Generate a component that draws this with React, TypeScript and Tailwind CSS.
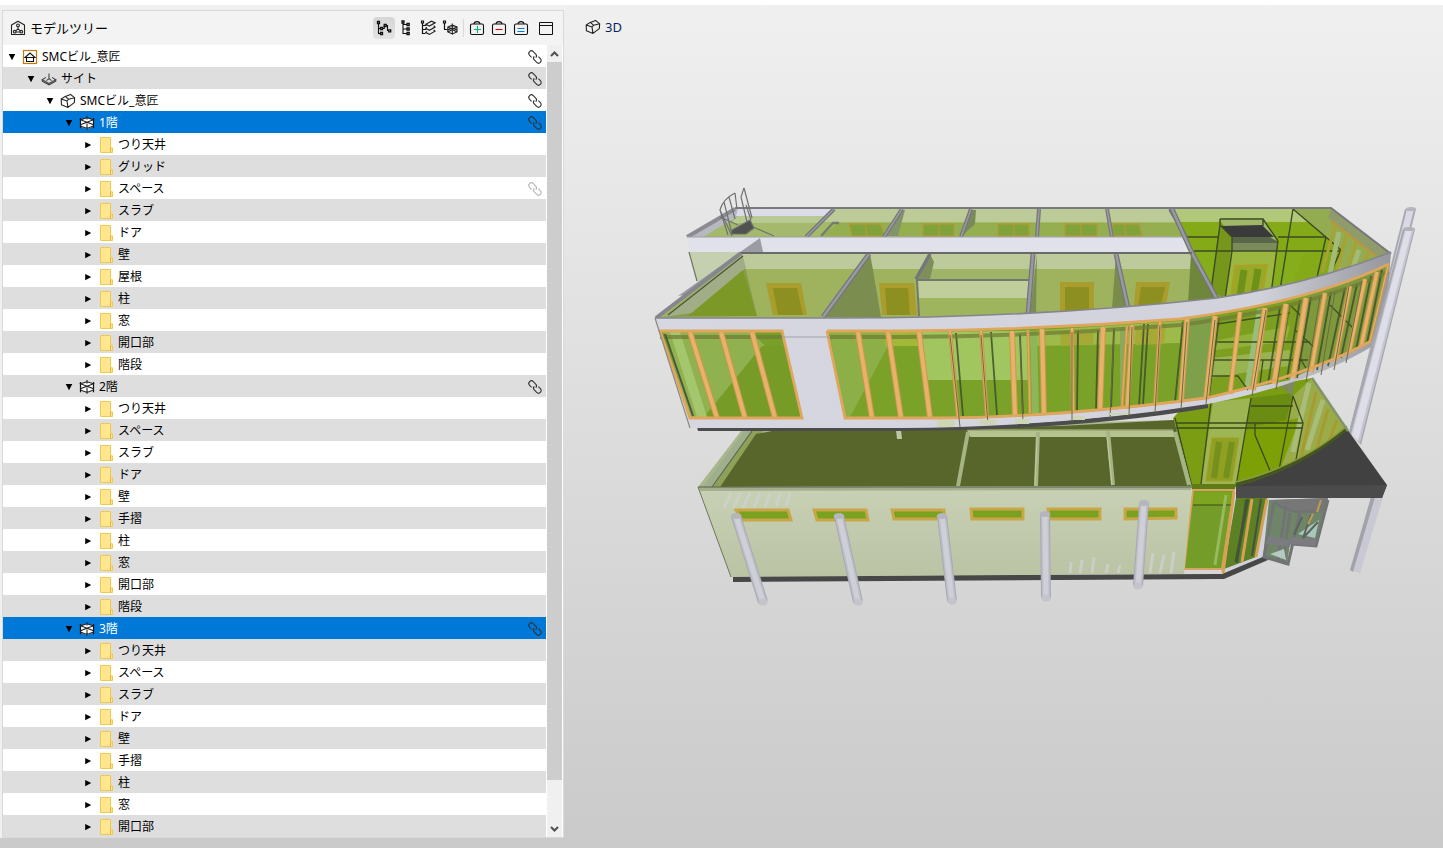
import { useState, type ReactNode } from "react";

type Kind = "project" | "site" | "building" | "storey" | "folder";
type Node = { id: string; label: string; kind: Kind; level: number; link?: "on" | "faint" };

const storey = (id: string, label: string, parts: string[]): Node[] => [
  { id, label, kind: "storey", level: 3, link: "on" },
  ...parts.map((p) => ({
    id: id + p,
    label: p,
    kind: "folder" as Kind,
    level: 4,
    link: id === "f1" && p === "スペース" ? ("faint" as const) : undefined,
  })),
];

const nodes: Node[] = [
  { id: "project", label: "SMCビル_意匠", kind: "project", level: 0, link: "on" },
  { id: "site", label: "サイト", kind: "site", level: 1, link: "on" },
  { id: "building", label: "SMCビル_意匠", kind: "building", level: 2, link: "on" },
  ...storey("f1", "1階", ["つり天井", "グリッド", "スペース", "スラブ", "ドア", "壁", "屋根", "柱", "窓", "開口部", "階段"]),
  ...storey("f2", "2階", ["つり天井", "スペース", "スラブ", "ドア", "壁", "手摺", "柱", "窓", "開口部", "階段"]),
  ...storey("f3", "3階", ["つり天井", "スペース", "スラブ", "ドア", "壁", "手摺", "柱", "窓", "開口部"]),
];

const indent = ["pl-[2px]", "pl-[21px]", "pl-10", "pl-[59px]", "pl-[78px]"];

function Icon({ children, className = "size-4" }: { children: ReactNode; className?: string }) {
  return (
    <svg viewBox="0 0 16 16" className={`${className} shrink-0`} fill="none" stroke="#222" strokeWidth="1.1" aria-hidden="true">
      {children}
    </svg>
  );
}

const CubeIcon = () => (
  <Icon>
    <path
      d="M1.2 6 5.2 3.4 10.6 1.4 14.7 4.8 14.3 9.6 8 14.4 1.4 11.8ZM1.2 6 7 8 8 14.4M5.2 3.4 8.6 6.2 7 8M8.6 6.2 14.7 4.8"
      strokeWidth="1.1"
      strokeLinejoin="round"
    />
  </Icon>
);

const HeaderIcon = () => (
  <Icon>
    <path d="M1.5 14.5V5L8 1.2 14.5 5v9.5Z" strokeLinejoin="round" />
    <circle cx="8" cy="5.4" r="1.4" />
    <path d="M8 6.8v2M8 8.8 5.6 10.8M8 8.8l2.4 2M6 12h4" />
    <circle cx="4.7" cy="11.7" r="1.3" />
    <circle cx="11.3" cy="11.7" r="1.3" />
  </Icon>
);

function KindIcon({ kind }: { kind: Kind }) {
  if (kind === "project")
    return (
      <Icon>
        <rect x="1.5" y="1.5" width="13" height="13" fill="#fff" stroke="#c77a0a" strokeWidth="1.2" />
        <path d="M3 8.5 8 4l5 4.5ZM4.5 8.5v4h7v-4" stroke="#111" />
      </Icon>
    );
  if (kind === "site")
    return (
      <Icon>
        <path d="M5 6.4 1.2 8.8 8 12.4l6.8-3.6L11 6.4M8 2.5v5M1.2 8.8v1.4L8 13.8l6.8-3.6V8.8M5.4 9.6 8 7.6l2.6 2" stroke="#444" />
      </Icon>
    );
  if (kind === "building") return <CubeIcon />;
  if (kind === "storey")
    return (
      <Icon>
        <path d="M2 5.2 8 2.7l6 2.5v6.5L8 14l-6-2.3Z" fill="#fff" stroke="none" />
        <path d="M1.5 3v10.2M14.5 3v10.2" stroke="#111" strokeWidth="1.2" />
        <path d="M8 1v3.4M8 8.5v6.3M1.5 4.8 8 2.8l6.5 2L8 7.2ZM1.5 9.8 8 7.2l6.5 2.6M1.5 11 8 13.4 14.5 11" stroke="#222" />
      </Icon>
    );
  return (
    <Icon>
      <path d="M2.5.5h10v10.3h2v4.7h-12Z" fill="#ffe68f" stroke="#efc94c" strokeWidth="1" />
      <path d="M12.5 10.8v4.7" stroke="#dfb63c" strokeWidth="1" />
    </Icon>
  );
}

const LinkIcon = ({ faint }: { faint: boolean }) => (
  <Icon className={faint ? "size-4 opacity-35" : "size-4"}>
    <g transform="rotate(45 8 8)" stroke="#333" strokeWidth="1.1">
      <path d="M5.8 10.6H3a2.6 2.6 0 0 1 0-5.2h3.4A2.6 2.6 0 0 1 9 8" />
      <path d="M10.2 5.4H13a2.6 2.6 0 0 1 0 5.2H9.6A2.6 2.6 0 0 1 7 8" />
    </g>
  </Icon>
);

const BagIcon = ({ d, color }: { d: string; color: string }) => (
  <Icon>
    <rect x="1.5" y="4" width="13" height="10.5" rx="1.5" stroke="#111" />
    <path d="M5 4C5.4 .8 10.6 .8 11 4" stroke="#111" />
    <path d={d} stroke={color} strokeWidth="1.1" />
  </Icon>
);

const tools: { name: string; icon: ReactNode }[] = [
  {
    name: "包含",
    icon: (
      <Icon>
        <path d="M2.5 3v10.5h2M2.5 8.5h2M6.5 8.5h1.7V5.8M10 5.5h1.5v5h1.6" stroke="#111" />
        <path d="M1.5 1.5h2v2h-2ZM4.5 7.5h2v2h-2ZM4.5 12.5h2v2h-2ZM8.2 4.5h2v2h-2ZM12.7 9.8h2v2h-2Z" fill="#fff" stroke="#111" strokeWidth="1.3" />
      </Icon>
    ),
  },
  {
    name: "型",
    icon: (
      <Icon>
        <path d="M5 3v10.5h4M5 4.5h4M5 9h4" stroke="#111" />
        <path d="M4 1h2v2H4ZM9 3.5h2.2v2H9ZM9 8h2.2v2H9ZM9 12.5h2.2v2H9Z" fill="#fff" stroke="#111" strokeWidth="1.3" />
      </Icon>
    ),
  },
  {
    name: "レイヤー",
    icon: (
      <Icon>
        <path d="M2.5 3v10.5h3M2.5 5.5h4M2.5 9.5h4M1.5 1h2v2h-2Z" stroke="#111" strokeWidth="1.2" />
        <path d="M5.8 4.2 11.5 1.2 15 2.8 9.4 6ZM6.8 7.2 5.8 8.4 9.4 10.2 15 7 13.6 5.6M6.8 11.4 5.8 12.6 9.4 14.4 15 11.2 13.6 9.8" stroke="#222" strokeWidth="1.2" />
      </Icon>
    ),
  },
  {
    name: "システム",
    icon: (
      <Icon>
        <path d="M2.5 3v6.5h3M1.5 1h2v2h-2Z" stroke="#111" strokeWidth="1.2" />
        <path d="m5.8 7 4.5-1.8L15 7v5l-4.7 2L5.8 12ZM5.8 7l4.5 2L15 7M10.3 3.4v11.4M5.8 10l4.5-2L15 10M5.8 12l9.2-5M15 12 5.8 7" stroke="#222" />
      </Icon>
    ),
  },
];

const bags = [
  { name: "追加", d: "M8.5 6v7M5 9.5h7", color: "#00b373" },
  { name: "削除", d: "M4.5 9.5h7", color: "#e00010" },
  { name: "設定", d: "M4.5 8.5h7M4.5 11.5h7", color: "#0078d7" },
];

const toolButton = "flex size-[22px] items-center justify-center rounded-sm";

function ModelTree() {
  const [closed, setClosed] = useState<string[]>([]);
  const [selected, setSelected] = useState<string[]>(["f1", "f3"]);
  const [tool, setTool] = useState(0);

  const visible = nodes.filter((n, i) => {
    let level = n.level;
    for (let k = i - 1; k >= 0; k--) {
      if (nodes[k].level < level) {
        if (closed.includes(nodes[k].id)) return false;
        level = nodes[k].level;
      }
    }
    return true;
  });
  const flip = (list: string[], id: string) => (list.includes(id) ? list.filter((x) => x !== id) : [...list, id]);

  return (
    <aside className="w-[562px] shrink-0 border border-[#d9d9d9] bg-white">
      <header className="flex h-[34px] items-center bg-[#f3f3f3] pr-[6px] pl-[7px]">
        <HeaderIcon />
        <h1 className="ml-1 flex-1 text-[13px] leading-4">モデルツリー</h1>
        <div className="flex">
          {tools.map((t, i) => (
            <button
              key={t.name}
              aria-label={t.name}
              onClick={() => setTool(i)}
              className={`${toolButton} ${tool === i ? "bg-linear-to-b from-[#d6d6d6] to-[#e2e2e2]" : ""}`}
            >
              {t.icon}
            </button>
          ))}
        </div>
        <div className="mx-[2px] h-[18px] w-px bg-[#d9d9d9]" />
        <div className="flex">
          {bags.map((b) => (
            <button key={b.name} aria-label={b.name} className={toolButton}>
              <BagIcon d={b.d} color={b.color} />
            </button>
          ))}
        </div>
        <button aria-label="ウィンドウ" className={`ml-[3px] ${toolButton}`}>
          <Icon>
            <path d="M1.5 2.5h13v12h-13ZM1.5 5.5h13" stroke="#111" strokeWidth="1" />
          </Icon>
        </button>
      </header>
      <div className="flex">
        <ul role="tree" className="min-w-0 flex-1">
          {visible.map((n, i) => {
            const on = selected.includes(n.id);
            const open = n.kind !== "folder" && !closed.includes(n.id);
            return (
              <li
                key={n.id}
                role="treeitem"
                aria-level={n.level + 1}
                aria-selected={on}
                aria-expanded={open}
                onClick={() => setSelected(flip(selected, n.id))}
                className={`flex h-[22px] items-center pt-[2px] pr-[3px] ${indent[n.level]} ${on ? "bg-[#0078d7] text-white" : i % 2 ? "bg-[#dedede]" : "bg-white"}`}
              >
                <button
                  aria-label={open ? "閉じる" : "開く"}
                  onClick={(e) => {
                    e.stopPropagation();
                    setClosed(flip(closed, n.id));
                  }}
                  className="mr-1 flex w-[13px] shrink-0 justify-center"
                >
                  <svg viewBox="0 0 8 8" className="size-2" fill="#000" aria-hidden="true">
                    <path d={open ? "M.7 1h6.6L4 7.2Z" : "M1.2 1v6.2L7.2 4.1Z"} />
                  </svg>
                </button>
                <KindIcon kind={n.kind} />
                <span className="ml-1 flex-1 truncate">{n.label}</span>
                {n.link && <LinkIcon faint={n.link === "faint"} />}
              </li>
            );
          })}
        </ul>
        <div className="mr-px ml-px flex w-[15px] flex-col bg-[#f0f0f0]">
          <button aria-label="上へ" className="flex h-[17px] items-center justify-center">
            <svg viewBox="0 0 9 6" className="h-[6px] w-[9px]" fill="none" stroke="#505050" strokeWidth="2">
              <path d="m1 5 3.5-3.5L8 5" />
            </svg>
          </button>
          <div className="flex-1 bg-[#cdcdcd]" />
          <div className="h-10" />
          <button aria-label="下へ" className="flex h-[17px] items-center justify-center">
            <svg viewBox="0 0 9 6" className="h-[6px] w-[9px]" fill="none" stroke="#505050" strokeWidth="2">
              <path d="m1 1 3.5 3.5L8 1" />
            </svg>
          </button>
        </div>
      </div>
    </aside>
  );
}

function P({ p, f, s, w = 1, o }: { p: string; f: string; s?: string; w?: number; o?: number }) {
  return <polygon points={p} fill={f} stroke={s} strokeWidth={s ? w : undefined} opacity={o} />;
}
function L({ d, s = "#3c4a1c", w = 1.2, o }: { d: string; s?: string; w?: number; o?: number }) {
  return <path d={d} fill="none" stroke={s} strokeWidth={w} opacity={o} />;
}

// Facade mullions: top x, top y, bottom x, bottom y, width
const mullions = [
  [690, 332, 717, 418, 6], [721, 332, 745, 418, 6], [752, 332, 775, 418, 6],
  [858, 332, 872, 418, 6], [888, 332, 901, 418, 6], [919, 332, 930, 418, 6],
  [950, 331, 958, 417, 4], [981, 331, 987, 417, 4], [1012, 331, 1015, 416, 6],
  [1028, 330, 1030, 413, 3], [1042, 329, 1044, 415, 6], [1072, 328, 1073, 413, 4],
  [1103, 327, 1100, 411, 6], [1127, 326, 1122, 407, 3], [1132, 325, 1127, 409, 5],
  [1160, 322, 1155, 405, 4], [1187, 319, 1181, 402, 6], [1215, 316, 1206, 399, 6],
  [1240, 312, 1230, 394, 5], [1265, 308, 1253, 390, 6], [1286, 304, 1274, 384, 6],
  [1306, 298, 1293, 378, 6], [1325, 293, 1311, 372, 5], [1350, 286, 1335, 361, 5],
  [1365, 279, 1349, 353, 5], [1377, 272, 1361, 347, 5], [1388, 266, 1370, 342, 3],
];

// Dark inner frames seen through the glass
const inner = [
  "M956 333 963 416", "M991 332 997 415", "M1020 334 1023 416", "M1078 331 1077 412", "M1098 330 1096 410",
  "M1114 328 1111 410", "M1144 324 1139 406", "M1148 324 1143 405", "M1183 322 1175 402", "M1219 318 1209 396",
  "M1280 307 1268 384", "M1284 320 1276 378", "M1300 300 1287 379", "M1311 297 1297 378", "M1331 292 1317 370",
  "M1345 288 1328 366", "M1357 284 1341 358", "M1371 276 1356 350", "M1382 270 1367 343",
];

const posts = [
  [736, 516, 763, 602], [839, 516, 858, 602], [942, 516, 952, 601], [1045, 514, 1046, 598], [1144, 503, 1138, 586],
];

const wallWindows = [
  "736,510 788,510 791,520 742,520", "814,510 866,510 868,520 817,520", "892,510 944,510 945,519 894,519",
  "971,509 1023,509 1023,519 972,519", "1048,509 1100,509 1100,519 1049,519", "1125,509 1176,509 1176,518 1125,519",
];

function LowerFloor() {
  return (
    <g>
      <P p="1190,400 1312,378 1347,431 1300,466 1236,487 1192,487 1173,418" f="#7b9d14" />
      <P p="1293,396 1312,378 1347,431 1303,462 1280,470" f="#9aac4a" />
      <P p="1213,402 1251,398 1237,484 1201,484" f="#9db653" />
      <P p="1251,398 1293,393 1286,420 1246,428" f="#6a8c12" />
      <P p="1246,428 1300,418 1280,470 1238,484" f="#7da007" />
      <P p="1212,438 1239,438 1232,481 1206,481" f="#90a023" s="#a3a02a" />
      <L d="M1219 442 1214 478M1232 442 1226 478" s="#74901d" w={6} />
      <L d="M1309 383 1293 452M1323 400 1307 450" s="#a9bd78" w={5} />
      <L d="M1316 392 1300 462M1328 409 1316 452M1337 420 1328 444" s="#a99a2d" w={3} />
      <L d="M1211 402 1201 484M1251 398 1236 486M1251 406H1293M1293 396 1279 470M1176 423H1303M1176 428H1303M1293 396 1303 423 1295 465M1255 424V435L1271 473M1175 418 1192 487" w={1.3} />
      <P p="1276,382 1296,376 1292,396" f="#7e8a5e" />
      <P p="1193,490 1234,490 1222,569 1184,569" f="#739c29" s="#d8a560" w={2} />
      <P p="1195,492 1232,492 1230,505 1193,505" f="#7ea51f" />
      <L d="M1193 505H1231" />
      <L d="M1226 495 1215 565" s="#98b95f" w={3} />
      <P p="1192,484 1236,484 1235,489 1192,489" f="#5d7c18" />
      <P p="1235,498 1292,498 1267,559 1222,574" f="#d2d2dc" />
      <P p="1236,498 1267,498 1256,557 1224,569" f="#5c8024" />
      <L d="M1248 499 1236 562" s="#3f5c20" w={3} />
      <L d="M1252 499 1242 562M1267 499 1256 557" s="#d6a055" w={3} />
      <L d="M1234 492 1223 573" s="#d6a055" w={3} />
      <L d="M1246 500 1237 563M1261 499 1252 556" s="#474f45" w={2} />
      <P p="733,576 1222,574 1265,556 1268,560 1224,579 733,582" f="#474747" />

      <P p="698,487 741,431 1174,420 1192,487" f="#a9b88c" />
      <P p="703,487 744,431 752,431 711,487" f="#9fae8c" />
      <P p="713,487 752,431 764,430 721,487" f="#8da158" />
      <P p="720,487 756,434 772,431 1060,426 1174,420 1191,487" f="#58662c" />
      <L d="M712 487 752 431" s="#59624b" />
      <P p="967,430 1173,430 1176,437 970,437" f="#b5c48e" />
      <L d="M967 430H1173" s="#96a56f" w={1.5} />
      <L d="M968 432 958 486M1038 432 1036 486M1108 431 1113 485M1175 432 1189 485" s="#a4b483" w={4} />
      <L d="M1037 437 1035 485M1107 437 1112 485" s="#c0cda3" w={1} />
      <P p="698,487 1192,486 1184,574 731,577" f="url(#wall)" />
      <P p="698,487 1192,486 1191,490 700,491" f="#a3ae8e" />
      <L d="M698 487H1192" s="#57604a" />
      <path d="M698 487 731 577" stroke="#6e765f" strokeWidth="1" />
      <path d="M724 508 731 493M733 509 740 493M743 508 750 493M754 507 760 493M765 507 770 493M776 506 780 493M786 506 790 493M1070 573 1071 562M1080 573 1082 560M1092 573 1094 557M1106 573 1108 564M1118 573 1120 565M1150 573 1153 553M1160 573 1164 555M1171 573 1174 552" stroke="#d0d2d0" strokeWidth="3" opacity=".75" />
      {wallWindows.map((p) => (
        <P key={p} p={p} f="#7aa220" s="#c9a748" w={3} />
      ))}
      {posts.map(([a, b, c, d]) => (
        <g key={a}>
          <path d={`M${a} ${b}L${c} ${d}`} stroke="#a9a9b2" strokeWidth="10" strokeLinecap="butt" />
          <path d={`M${a} ${b}L${c} ${d}`} stroke="#bfbfc9" strokeWidth="8" />
          <path d={`M${a} ${b}L${c} ${d}`} stroke="#cfcfd8" strokeWidth="5" />
          <ellipse cx={c} cy={d} rx="4.5" ry="3.5" fill="#c4c4cd" />
          <ellipse cx={a} cy={b} rx="5.3" ry="3" fill="#b5b5be" />
        </g>
      ))}
      <P p="896,430 901,430 902,439 897,439" f="#bdc6a6" />
    </g>
  );
}

function Entrance() {
  return (
    <g>
      <P p="1373,497 1383,497 1360,573 1350,570" f="#c9c9d3" />
      <P p="1371,497 1375,497 1353,572 1350,570" f="#a2a2aa" />
      <P p="1269,500 1328,498 1315,545 1290,543 1287,565 1263,557" f="#6f8568" />
      <P p="1274,500 1328,498 1322,513 1297,513" f="#777" />
      <L d="M1274 502 1264 557 1288 564 1300 512M1274 502Q1284 510 1297 512L1318 511M1328 500 1316 546 1292 544M1290 513 1283 562M1286 506 1278 560" s="#717376" w={3} />
      <P p="1292,537 1317,538 1315,546 1290,544" f="#7a7c7f" />
      <P p="1268,536 1292,540 1290,547 1266,544" f="#7a7c7f" />
      <P p="1270,554 1284,549 1286,560" f="#b6c9c2" />
      <P p="1298,534 1319,520 1315,538" f="#aac7bd" />
      <L d="M1302 517 1294 535M1311 515 1303 538 1318 522" s="#5c625e" w={2} />
      <L d="M1321 500 1317 512M1313 514 1308 524" s="#c39b4e" w={2} />
      <path d="M1236 486Q1300 470 1347 429L1387 485 1382 498H1236Z" fill="#414141" />
      <P p="1236,486 1387,485 1382,498 1236,498" f="#4b4b4b" />
      <path d="M1236 484Q1300 468 1347 428" fill="none" stroke="#45551f" strokeWidth="4" />
      <path d="M1236 482Q1300 466 1347 426" fill="none" stroke="#8ba03c" strokeWidth="1.5" />
      <L d="M1312 378 1348 431" s="#83936b" w={2.5} />
    </g>
  );
}

function UpperFloor() {
  return (
    <g>
      <P p="689,252 760,240 735,282 697,281" f="#c5d0b1" />
      <L d="M689 252 697 281" s="#6e765f" />
      <P p="687,237 735,208 1331,208 1391,253 1340,290 1217,300 1183,237" f="#a3bb68" />
      <P p="735,208 1331,208 1345,222 725,222" f="#bccb98" />
      <P p="687,237 735,208 830,208 822,215 738,216 703,237" f="#b8b8c0" />
      <P p="738,209 834,209 826,216 736,216" f="#dcdce8" />
      <P p="708,236 738,216 820,216 806,236" f="#a4b96c" />
      <P p="738,216 825,216 818,223 731,223" f="#b9c993" />

      <P p="1172,209 1294,209 1341,250 1330,292 1217,300" f="#84aa18" />
      <P p="1172,209 1294,209 1309,222 1180,222" f="#b1c779" />
      <P p="1196,251 1305,251 1290,290 1219,299" f="#86ad1c" />
      <P p="1294,209 1331,209 1390,253 1340,275 1341,250" f="#93ac51" />
      <P p="1331,209 1390,253 1380,259 1328,218" f="#8f9b6b" />
      <P p="1220,220 1232,238 1225,298 1211,291" f="#76971b" />
      <P p="1232,242 1277,242 1271,292 1226,298" f="#9cb73f" />
      <P p="1235,266 1267,265 1262,295 1231,298" f="#98a927" s="#aca127" w={2} />
      <L d="M1244 270 1240 296M1258 269 1254 295" s="#6e911a" w={7} />
      <P p="1220,220 1263,220 1278,240 1232,238" f="#9fb768" />
      <P p="1221,226 1262,225 1274,237 1232,237" f="#3a3a3a" />
      <P p="1232,237 1270,237 1278,242 1277,251 1232,251" f="#5a664a" />
      <P p="1232,243 1278,243 1277,251 1231,251" f="#7c8b5c" />
      <L d="M1220 219H1263L1278 241M1220 219V225L1232 237V251L1225 299M1263 219V226M1220 225 1211 291M1186 237H1219M1278 237H1326M1194 251H1341M1293 209 1341 250 1325 285M1293 209 1280 290M1326 237 1316 282M1278 241 1271 294" s="#3d4a24" w={1.4} />
      <L d="M1339 232 1328 283M1359 250 1350 276" s="#a3ba79" w={5} />
      <L d="M1331 221 1378 258" s="#b7983d" w={2.5} />
      <L d="M1346 236 1336 276M1356 242 1347 273M1369 252 1364 264M1335 226 1322 272" s="#aaa133" w={3} />

      <P p="822,236 838,223 1180,223 1186,236" f="#94ae50" />
      <g fill="#7fa23a" stroke="#b39b34" strokeWidth="1.3">
        <path d="M849 224h31l5 12h-33ZM923 224h31v12h-31ZM998 224h31v12h-31ZM1065 224h32v12h-32ZM1112 224h27l3 12h-28Z" />
      </g>
      <L d="M865 224 867 236M939 224V236M1014 224V236M1081 224V236M1124 224 1126 236" s="#b39b34" />
      <P p="901,210 905,210 898,236 882,236" f="#83936a" />
      <P p="972,210 976,210 975,224 962,236" f="#7a8b5a" />
      <L d="M834 209 806 237M902 209 884 237M971 209 961 237M1039 209 1037 237M1107 209 1112 237M1170 209 1186 237" s="#76767c" w={4} />
      <L d="M834 209 806 237M902 209 884 237M971 209 961 237M1039 209 1037 237M1107 209 1112 237" s="#9a9aa0" w={1.5} />
      <L d="M821 236 833 223H839" s="#777b70" w={2.5} />
      <L d="M735 208H1331L1391 254" s="#78797c" w={2.2} />
      <L d="M687 237 735 209" s="#8b8b94" w={4} />

      <P p="687,237 1183,237 1183,252 690,252" f="#e1e1eb" />
      <L d="M687 237H1183" s="#9f9fa8" />
      <P p="678,296 760,238 763,252 740,254 690,294" f="#9b9ba3" />

      <P p="656,318 740,253 1192,253 1217,300 1130,310 1030,316 880,318" f="#9fb35f" />
      <P p="740,253 1192,253 1200,269 722,269" f="#bdca9c" />
      <P p="664,317 742,254 757,316" f="#879c4d" />
      <P p="742,254 746,268 692,313 664,317" f="#a1ad87" />
      <P p="743,270 757,316 688,316" f="#7c9928" />
      <P p="870,254 873,270 881,317 826,317" f="#7c8d50" />
      <P p="930,254 1030,254 1030,279 918,279" f="#a0b468" />
      <P p="930,254 1030,254 1030,269 932,269" f="#bdca99" />
      <P p="930,254 934,262 930,279 918,279" f="#7f8f5c" />
      <P p="917,280 1029,280 1027,298 918,298" f="#c0ce9b" />
      <P p="918,298 1027,298 1026,315 919,316" f="#9fb55d" />
      <P p="1037,254 1036,313 1030,314" f="#7a8d52" />
      <P p="1116,254 1127,307 1112,309" f="#7a8c4a" />
      <P p="1191,254 1216,298 1188,303" f="#6f873b" />
      {["766,283 801,283 807,315 773,315", "879,283 914,283 917,315 882,315", "1060,282 1094,282 1094,311 1060,312", "1136,282 1170,282 1166,305 1134,307"].map((p) => (
        <P key={p} p={p} f="#a89d2d" />
      ))}
      {["773,288 797,288 803,315 778,315", "885,288 908,288 910,315 887,315", "1065,287 1089,287 1089,311 1065,312", "1141,287 1165,287 1161,305 1138,307"].map((p) => (
        <P key={p} p={p} f="#8d9020" />
      ))}
      <L d="M869 254 823 317M1033 254 1028 315M1116 254 1128 308M1172 209 1192 253 1217 299" s="#74757b" w={5} />
      <L d="M869 254 823 317M1033 254 1028 315M1116 254 1128 308M1172 209 1192 253 1217 299" s="#9999a3" w={2.5} />
      <L d="M930 254 916 279" s="#74757b" w={3.5} />
      <L d="M916 280H1029M917 280 919 316" s="#74786e" w={2} />
      <L d="M740 253H1192" s="#67696a" w={2.2} />
      <L d="M656 318 741 253" s="#86868e" w={4} />
      <L d="M668 315 743 256" s="#4a5532" />

      <g stroke="#6f7173" fill="none" strokeWidth="1.2">
        <path d="M728 235 720 210Q723 199 735 193M720 210l12 26M724 202l8 32M729 197l6 22M735 193l2 16M744 188l8 30M744 188 741 197 747 222M720 217l18 8M753 227l21 9M746 205l5 15" />
        <path d="m732 230 18-10 4 8-8 6h-15Z" fill="#505250" />
      </g>
    </g>
  );
}

function Facade() {
  return (
    <g>
      <path d="M697 427H900Q1080 426 1208 402L1208 408Q1080 430 900 431L698 431Z" fill="#4c4c4e" />
      <path d="M655 318H820Q1030 319 1217 298Q1310 284 1391 252L1388 290 1371 347Q1310 384 1208 404Q1060 427 900 428H691Z" fill="url(#band)" />
      <path d="M660 331H782L802 419H690Z" fill="#77a02a" />
      <P p="664,332 752,332 765,346 704,417 690,417" f="#8fb14f" />
      <P p="762,346 784,346 801,417 704,417" f="#769b26" />
      <path d="M827 331H900Q1040 330 1180 319Q1310 302 1389 264L1371 342Q1310 376 1206 399Q1060 418 940 419H845Z" fill="#7ba228" />
      <P p="829,332 888,332 888,346 850,417 845,417" f="#8caf47" />
      <P p="885,332 950,332 955,346 885,346" f="#a2b838" />
      <P p="920,332 1027,331 1028,380 926,380" f="#a2c65f" />
      <P p="1030,331 1182,321 1180,343 1030,346" f="#9dba4a" />
      <P p="1187,319 1212,316 1204,398 1183,401" f="#7fa04a" />
      <P p="1212,316 1300,300 1290,380 1205,398" f="#7d9f20" />
      <P p="1218,340 1290,326 1286,342 1215,350" f="#91b13b" />
      <P p="1212,358 1290,350 1288,366 1210,378" f="#98b451" />
      <P p="1300,300 1389,264 1371,342 1293,378" f="#7e983c" />
      <P p="670,332 680,332 707,417 697,417" f="#a4c66c" />
      <P p="1030,331 1037,331 1039,414 1032,414" f="#8cb657" />
      <P p="1257,309 1262,308 1250,389 1244,390" f="#9bbd7c" />
      <P p="1120,328 1129,327 1120,407" f="#8aa95a" />
      <P p="1060,332 1094,330 1093,344 1061,346" f="#a5aa36" />
      <P p="1136,326 1166,323 1164,344 1135,345" f="#a5aa36" />
      <L d="M1211 325 1290 313M1217 342H1310M1213 360H1308M1210 376H1238L1248 390M1263 360 1260 384M1290 305 1305 320M1295 330 1315 348M1330 305 1355 330M1300 358 1307 370" s="#3f5120" w={1.3} />
      {inner.map((d) => (
        <L key={d} d={d} s="#3e4f2b" w={1.8} o={0.85} />
      ))}
      <L d="M660 337H782M829 337H900Q1040 336 1180 325Q1310 308 1388 272" s="#6f7d35" w={4} o={0.75} />
      <L d="M665 334 693 416" s="#48583d" w={2} />
      {mullions.map(([a, b, c, d, w]) => (
        <g key={a}>
          <path d={`M${a} ${b}L${c} ${d}`} stroke="#ca984b" strokeWidth={w} />
          <path d={`M${a} ${b}L${c} ${d}`} stroke="#e7b26b" strokeWidth={w - 2} />
        </g>
      ))}
      <L d="M660 331H782L802 418H690Z" s="#dfa65d" w={2.8} />
      <L d="M827 331H900Q1040 330 1180 319Q1310 302 1389 264M827 331 845 418H940Q1060 417 1206 398Q1310 375 1371 341" s="#dfa65d" w={2.8} />
      <L d="M782 337H830" s="#a1a1a8" />
      <L d="M655 318 690 428" s="#8a8a83" />
      <L d="M950 335 960 427M981 335 988 425M1020 335 1023 424M1072 332 1072 421M1114 330 1110 418M1132 327 1129 416M1160 325 1155 413M1187 322 1181 409M1215 320 1206 404M1266 310 1252 396M1290 306 1276 390M1320 297 1306 382M1335 292 1321 375M1349 286 1334 370M1362 281 1346 363" s="#6c6b42" w={1} />
      <path d="M655 318H820Q1030 319 1217 298Q1310 284 1391 252" fill="none" stroke="#85858c" strokeWidth="1.6" />
      <path d="M937 420h18v7h-18ZM980 420h16v5h-16ZM1015 419h14v5h-14ZM1073 416h12v4h-12ZM1110 413h18v2h-18Z" fill="#cdd6b4" />
    </g>
  );
}

function BuildingModel() {
  return (
    <svg viewBox="564 45 879 803" className="block w-full" role="img" aria-label="建物モデル">
      <defs>
        <linearGradient id="wall" x1="0" y1="0" x2="0" y2="1">
          <stop offset="0" stopColor="#c8d1b5" />
          <stop offset="1" stopColor="#bac3a4" />
        </linearGradient>
        <linearGradient id="band" x1="0" y1="0" x2="1" y2="0">
          <stop offset="0" stopColor="#d7d7e1" />
          <stop offset=".82" stopColor="#d2d2dc" />
          <stop offset=".94" stopColor="#aaaab2" />
          <stop offset="1" stopColor="#96969e" />
        </linearGradient>
      </defs>
      <P p="1405,209 1416,209 1361,428 1350,428" f="#a9a9b2" />
      <P p="1407,209 1414,209 1359,428 1352,428" f="#d9d9e3" />
      <ellipse cx="1411" cy="209" rx="5" ry="2" fill="#b5b5be" />
      <LowerFloor />
      <UpperFloor />
      <Facade />
      <P p="1403,229 1415,229 1361,445 1349,432" f="#a6a6af" />
      <P p="1405,229 1414,229 1360,443 1351,434" f="#c6c6d0" />
      <P p="1406,229 1412,229 1358,441 1352,435" f="#dedee8" />
      <ellipse cx="1409" cy="229" rx="6" ry="2" fill="#b2b2bb" />
      <Entrance />
    </svg>
  );
}

export default function App() {
  return (
    <div className="flex min-h-screen flex-col bg-linear-to-b from-[#f0f0f0] to-[#cacaca] font-['Noto_Sans','Noto_Sans_CJK_JP',sans-serif] text-xs text-black">
      <div className="h-[5px] bg-white" />
      <div className="flex flex-1 items-start">
        <div className="shrink-0 bg-[#f0f0f0] pt-[5px] pl-[2px]">
          <ModelTree />
        </div>
        <main className="min-w-0 flex-1">
          <header className="flex h-10 items-center gap-1 pt-1 pl-[21px] text-[13px] text-[#0b1f5c]">
            <CubeIcon />
            <h2 className="leading-4">3D</h2>
          </header>
          <BuildingModel />
        </main>
      </div>
    </div>
  );
}
